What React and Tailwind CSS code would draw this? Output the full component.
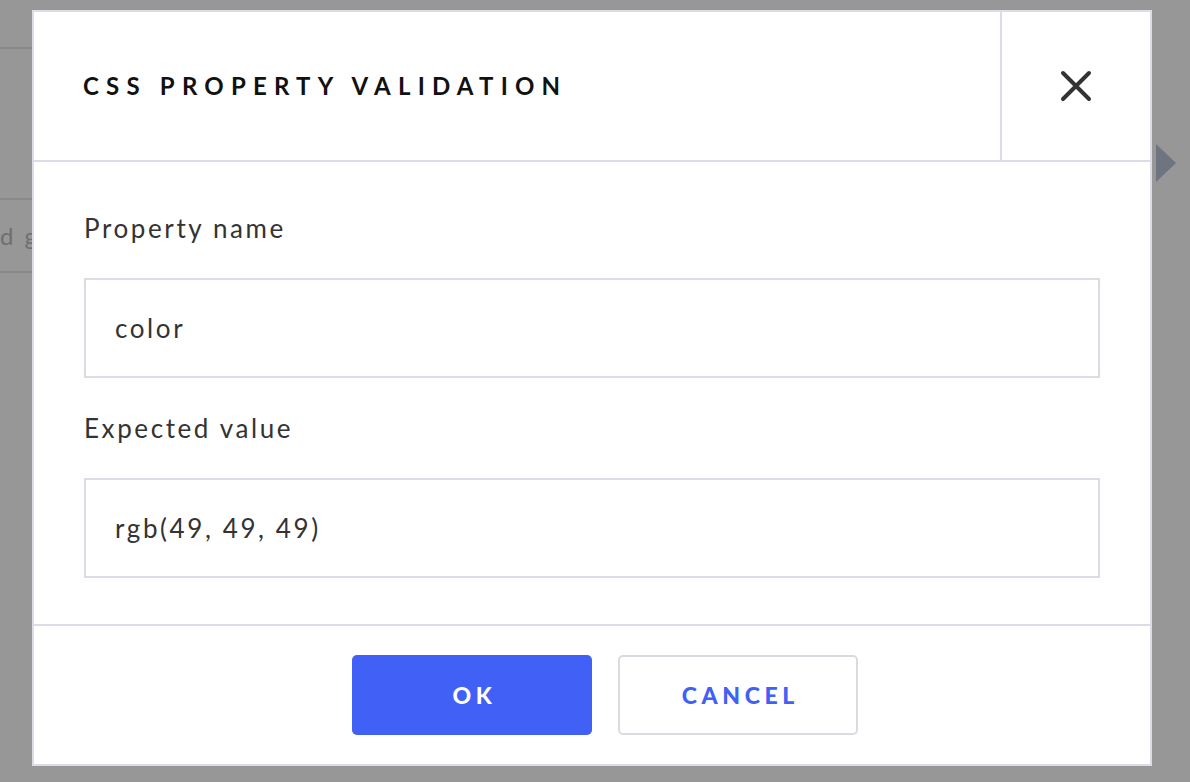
import React from 'react';

const Field = ({ label, value, className = '' }) => {
  return (
    <div className={className}>
      <div className="text-[26px] leading-[30px] tracking-[0.1em] text-[#333]">{label}</div>
      <div className="mt-[35px] h-[100px] border-2 border-[#dcdbe6] flex items-center pl-[29px] text-[26px] tracking-[0.1em] text-[#333]">
        {value}
      </div>
    </div>
  );
};

const App = () => {
  return (
    <div className="relative w-[1190px] h-[782px] overflow-hidden bg-[#979797] font-['Lato',sans-serif]">
      {/* Page behind the overlay */}
      <div className="absolute left-0 top-[47px] w-[40px] h-[2px] bg-[#8a8a8a]"></div>
      <div className="absolute left-0 top-[198px] w-[40px] h-[75px] border-y-2 border-[#8a8a8a] flex items-center text-[24px] tracking-[0.1em] text-[#6f6f6f]">
        d g
      </div>
      <svg className="absolute left-[1156px] top-[144px]" width="20" height="38" viewBox="0 0 20 38">
        <path d="M0 0 L20 19 L0 38 Z" fill="#6e7580" />
      </svg>

      {/* Modal */}
      <div className="absolute left-[32px] top-[10px] w-[1120px] h-[756px] bg-white border-2 border-[#dcdbe6] flex flex-col">
        <div className="h-[150px] flex border-b-2 border-[#dcdbe6]">
          <div className="flex-1 flex items-center pl-[49px] text-[24px] font-bold tracking-[0.3em] text-[#111]">
            CSS PROPERTY VALIDATION
          </div>
          <div className="w-[150px] border-l-2 border-[#dcdbe6] flex items-center justify-center">
            <svg width="32" height="32" viewBox="0 0 32 32" fill="none" stroke="#333" strokeWidth="4" strokeLinecap="round">
              <path d="M3 3 L29 29 M29 3 L3 29" />
            </svg>
          </div>
        </div>

        <div className="flex-1 px-[50px] pt-[51px]">
          <Field label="Property name" value="color" />
          <Field label="Expected value" value="rgb(49, 49, 49)" className="mt-[35px]" />
        </div>

        <div className="h-[140px] border-t-2 border-[#dcdbe6] flex items-center justify-center gap-[26px] pl-[26px]">
          <button className="w-[240px] h-[80px] rounded-[5px] bg-[#4160f5] text-white text-[23px] font-black tracking-[0.2em] pl-[0.2em]">
            OK
          </button>
          <button className="w-[240px] h-[80px] rounded-[5px] border-2 border-[#dadae0] bg-white text-[#4160f5] text-[23px] font-black tracking-[0.2em] pl-[0.2em]">
            CANCEL
          </button>
        </div>
      </div>
    </div>
  );
};

export default App;
